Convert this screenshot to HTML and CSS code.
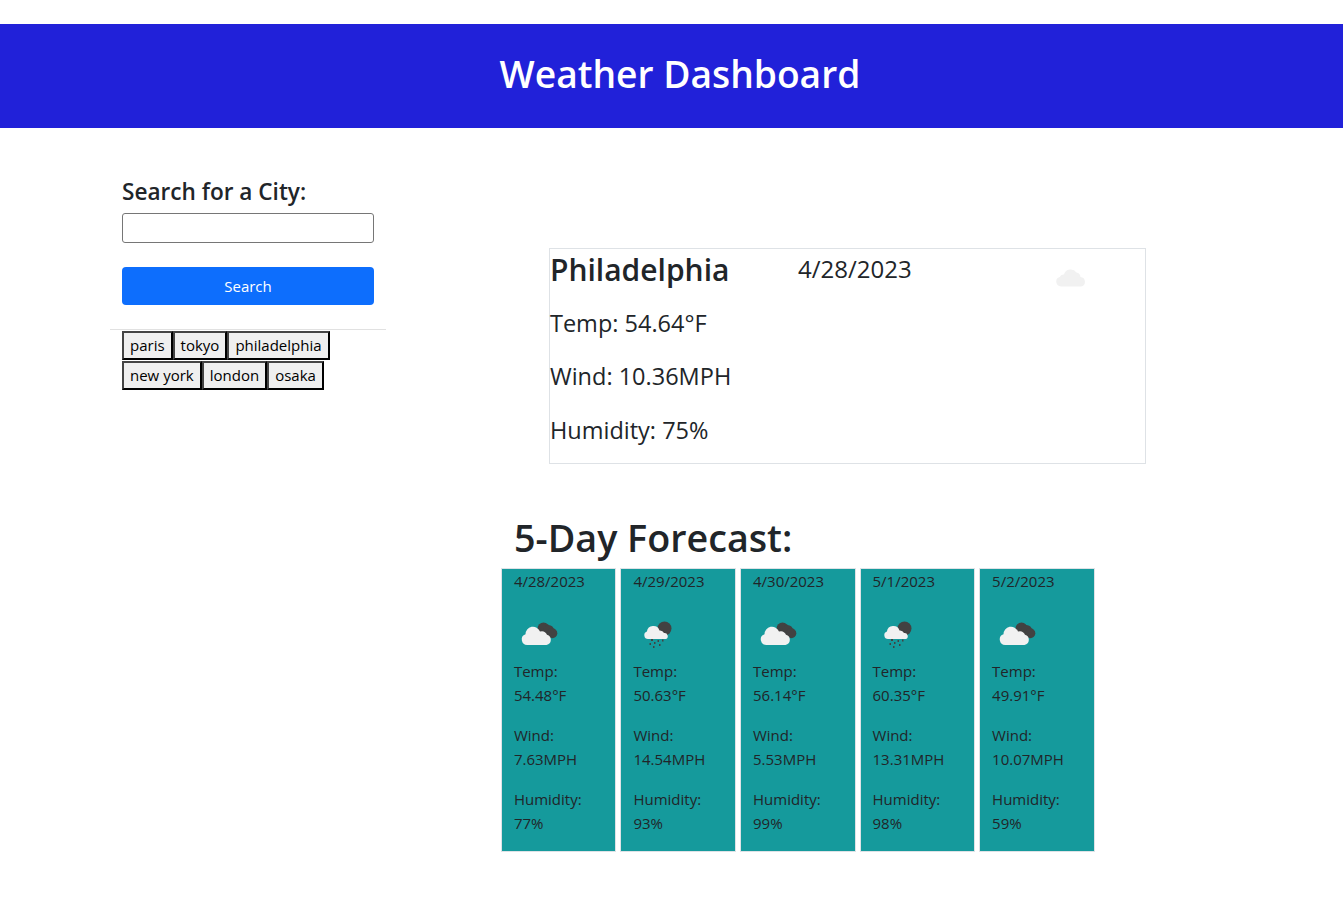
FILE: index.html
```html
<!DOCTYPE html>
<html>
<head>
  <title>Weather Dashboard</title>
  <meta charset=utf-8>
  <meta name="viewport" content="width=device-width, initial-scale=1" />
  <link rel="stylesheet" href="styles.css">
</head>
<body>

  <header class="banner">
    <h1 class="banner-title">Weather Dashboard</h1>
  </header>

  <main class="page">
    <aside class="search">
      <label class="search-label" for="city">Search for a City:</label>
      <input class="search-input" id="city" type="text">
      <button class="search-button">Search</button>
      <hr class="search-rule">
      <div class="history">
        <button class="history-item">paris</button><button class="history-item">tokyo</button><button class="history-item">philadelphia</button><button class="history-item">new york</button><button class="history-item">london</button><button class="history-item">osaka</button>
      </div>
    </aside>

    <section class="weather">
      <div class="today">
        <div class="today-head">
          <h2 class="today-city">Philadelphia</h2>
          <span class="today-date">4/28/2023</span>
          <svg class="today-icon" viewBox="0 0 30 22"><use href="#cloud"/></svg>
        </div>
        <p class="today-line">Temp: 54.64°F</p>
        <p class="today-line">Wind: 10.36MPH</p>
        <p class="today-line">Humidity: 75%</p>
      </div>

      <h2 class="forecast-title">5-Day Forecast:</h2>
      <div class="forecast">
        <div class="day">
          <p class="day-date">4/28/2023</p>
          <svg class="day-icon" viewBox="0 0 50 42"><use href="#broken"/></svg>
          <p class="day-line">Temp:<br>54.48°F</p>
          <p class="day-line">Wind:<br>7.63MPH</p>
          <p class="day-line">Humidity:<br>77%</p>
        </div>
        <div class="day">
          <p class="day-date">4/29/2023</p>
          <svg class="day-icon" viewBox="0 0 50 42"><use href="#rain"/></svg>
          <p class="day-line">Temp:<br>50.63°F</p>
          <p class="day-line">Wind:<br>14.54MPH</p>
          <p class="day-line">Humidity:<br>93%</p>
        </div>
        <div class="day">
          <p class="day-date">4/30/2023</p>
          <svg class="day-icon" viewBox="0 0 50 42"><use href="#broken"/></svg>
          <p class="day-line">Temp:<br>56.14°F</p>
          <p class="day-line">Wind:<br>5.53MPH</p>
          <p class="day-line">Humidity:<br>99%</p>
        </div>
        <div class="day">
          <p class="day-date">5/1/2023</p>
          <svg class="day-icon" viewBox="0 0 50 42"><use href="#rain"/></svg>
          <p class="day-line">Temp:<br>60.35°F</p>
          <p class="day-line">Wind:<br>13.31MPH</p>
          <p class="day-line">Humidity:<br>98%</p>
        </div>
        <div class="day">
          <p class="day-date">5/2/2023</p>
          <svg class="day-icon" viewBox="0 0 50 42"><use href="#broken"/></svg>
          <p class="day-line">Temp:<br>49.91°F</p>
          <p class="day-line">Wind:<br>10.07MPH</p>
          <p class="day-line">Humidity:<br>59%</p>
        </div>
      </div>
    </section>
  </main>

  <svg class="icon-defs" aria-hidden="true">
    <defs>
      <g id="cloud">
        <path fill="#f1f1f1" d="M5 21.500A4.800 4.800 0 0 1 3.700 12.100 4 4 0 0 1 8 9.500 7 7 0 0 1 20.500 7.500 5 5 0 0 1 24.500 12 4.800 4.800 0 0 1 25 21.500z"/>
      </g>
      <g id="broken">
        <g fill="#424242">
          <circle cx="29.500" cy="18.500" r="6"/>
          <circle cx="34.500" cy="20.500" r="5.500"/>
          <circle cx="38.300" cy="23.200" r="5"/>
        </g>
        <path fill="#f1f1f1" d="M13.500 35A5.500 5.500 0 0 1 11.500 24.300 7.500 7.500 0 0 1 26 21.500 6 6 0 0 1 33 24.700 5.300 5.300 0 0 1 32.500 35z"/>
      </g>
      <g id="rain">
        <circle cx="31.500" cy="18.500" r="7" fill="#424242"/>
        <path fill="#f1f1f1" d="M15 29A3.800 3.800 0 0 1 13.900 21.600 6.500 6.500 0 0 1 26.500 20.500 4.500 4.500 0 0 1 31 23 3.200 3.200 0 0 1 33 29z"/>
        <g fill="#424242">
          <rect x="18" y="29" width="2" height="2"/>
          <rect x="24.500" y="30" width="1.500" height="2"/>
          <rect x="29" y="29.500" width="1.500" height="2"/>
          <rect x="16.500" y="33" width="1.500" height="2"/>
          <rect x="21" y="32" width="1.500" height="2"/>
          <rect x="26" y="34" width="1.500" height="2"/>
          <rect x="20" y="36" width="1.500" height="2"/>
        </g>
      </g>
    </defs>
  </svg>

</body>
</html>
```

FILE: styles.css
```css
* {
  box-sizing: border-box;
  font-family: "Open Sans", "Noto Sans", sans-serif;
}
body {
  margin: 0;
  padding-top: 24px;
  background: #fff;
  color: #212529;
  font-size: 15px;
  line-height: 24px;
}
p, h1, h2 {
  margin: 0;
}

.banner {
  height: 104px;
  background: #2121d9;
  color: #fff;
  display: flex;
  align-items: center;
  justify-content: center;
  padding-left: 17px;
  padding-bottom: 4px;
}
.banner-title {
  font-size: 37.200px;
  font-weight: 600;
  line-height: 48px;
}

.page {
  display: flex;
  padding: 48px 0 0 110px;
}

.search {
  width: 276px;
  flex-shrink: 0;
  padding: 0 12px;
  display: flex;
  flex-direction: column;
}
.search-label {
  font-size: 22.600px;
  font-weight: 600;
  line-height: 32px;
  margin-bottom: 5px;
}
.search-input {
  height: 30px;
  border: 1px solid #767676;
  border-radius: 3px;
  background: #fff;
}
.search-button {
  height: 38px;
  margin-top: 24px;
  border: 0;
  border-radius: 4px;
  background: #0d6efd;
  color: #fff;
  font-size: 15px;
}
.search-rule {
  margin: 24px -12px 1px;
  border: 0;
  border-top: 1px solid #e1e1e1;
}
.history {
  display: flex;
  flex-wrap: wrap;
  width: 220px;
  row-gap: 1px;
}
.history-item {
  height: 29px;
  padding: 0 6px 2px;
  border: 2px solid;
  border-color: #444 #000 #000 #444;
  background: #efefef;
  color: #000;
  font-size: 15px;
}

.weather {
  margin-left: 114.900px;
  display: flex;
  flex-direction: column;
}
.today {
  width: 597px;
  height: 216px;
  margin: 72px 0 0 48.100px;
  border: 1px solid #dee2e6;
}
.today-head {
  display: flex;
  align-items: flex-start;
  height: 55.700px;
}
.today-city {
  width: 248px;
  font-size: 30px;
  font-weight: 600;
  line-height: 42px;
}
.today-date {
  font-size: 24px;
  line-height: 40px;
}
.today-icon {
  width: 30px;
  height: 22px;
  margin: 16px 59px 0 auto;
}
.today-line {
  font-size: 23.500px;
  line-height: 36px;
  margin-bottom: 17.500px;
}
.today-line:last-child {
  margin-bottom: 0;
}

.forecast-title {
  font-size: 37.700px;
  font-weight: 600;
  line-height: 48px;
  margin: 50px 0 6px 13.100px;
}
.forecast {
  display: flex;
  gap: 4px;
}
.day {
  flex: none;
  width: 115.550px;
  height: 284px;
  padding: 0 12px;
  background: #159a9c;
  border: 1px solid #dee2e6;
  font-size: 15px;
}
.day-date {
  line-height: 24px;
}
.day-icon {
  display: block;
  width: 50px;
  height: 42px;
  margin: 17px 0 7px 0;
}
.day-line {
  margin-bottom: 16px;
}

.icon-defs {
  position: absolute;
  width: 0;
  height: 0;
}
```
